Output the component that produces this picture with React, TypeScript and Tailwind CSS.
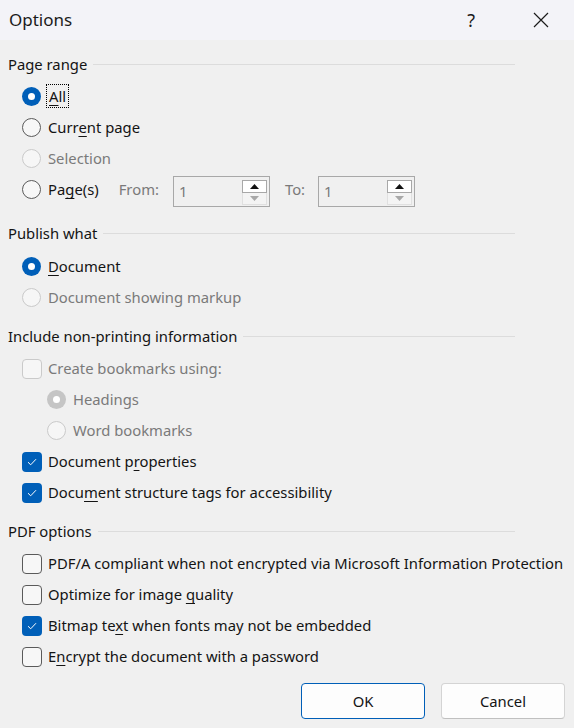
import type { ReactNode } from "react"

const font = { fontFamily: '"Noto Sans", "Open Sans", Arial, sans-serif' }

// Section heading with the thin rule running to the right
function Heading({ label, mt }: { label: string; mt: string }) {
  return (
    <div className={`flex items-center h-[22px] w-[507px] ${mt}`}>
      <span className="text-[14.8px] text-[#141414] whitespace-nowrap">{label}</span>
      <div className="flex-1 h-px bg-[#dcdcdc] ml-[6px] mt-[1px]" />
    </div>
  )
}

function Radio({ checked, disabled }: { checked?: boolean; disabled?: boolean }) {
  if (checked)
    return (
      <span
        className={`w-[19px] h-[19px] rounded-full flex items-center justify-center shrink-0 ${
          disabled ? "bg-[#c5c5c5]" : "bg-[#005fb8]"
        }`}
      >
        <span className="w-[7px] h-[7px] rounded-full bg-white" />
      </span>
    )
  return (
    <span
      className={`w-[19px] h-[19px] rounded-full border shrink-0 ${
        disabled ? "border-[#cacaca] bg-[#f6f6f6]" : "border-[#5a5a5a] bg-[#f7f7f7]"
      }`}
    />
  )
}

function Check({ checked, disabled }: { checked?: boolean; disabled?: boolean }) {
  if (checked)
    return (
      <span className="w-[20px] h-[20px] rounded-[4px] bg-[#005fb8] flex items-center justify-center shrink-0">
        <svg width="10" height="8" viewBox="0 0 10 8" fill="none">
          <path d="M1 4.2 L3.7 6.8 L9 1.2" stroke="white" strokeWidth="1" />
        </svg>
      </span>
    )
  return (
    <span
      className={`w-[20px] h-[20px] rounded-[4px] border shrink-0 ${
        disabled ? "border-[#cacaca] bg-[#f6f6f6]" : "border-[#5a5a5a] bg-[#f7f7f7]"
      }`}
    />
  )
}

function Row({
  control,
  children,
  disabled,
  indent,
  radio,
}: {
  control: ReactNode
  children: ReactNode
  disabled?: boolean
  indent?: boolean
  radio?: boolean
}) {
  return (
    <div className={`flex items-center h-[31px] ${indent ? "pl-[39px]" : "pl-[14px]"}`}>
      {control}
      <span
        className={`${radio ? "ml-[7px]" : "ml-[6px]"} text-[14.8px] whitespace-nowrap ${
          disabled ? "text-[#7a7a7a]" : "text-[#141414]"
        }`}
      >
        {children}
      </span>
    </div>
  )
}

function U({ children }: { children: ReactNode }) {
  return <span className="underline underline-offset-[3px] decoration-1">{children}</span>
}

function Spin() {
  return (
    <div className="w-[97px] h-[31px] border border-[#a8a8a8] bg-[#f0f0f0] flex items-start pt-[3px] pr-[2px]">
      <span className="flex-1 pl-[5px] text-[14.8px] text-[#7a7a7a] leading-[22px]">1</span>
      <div className="flex flex-col w-[25px]">
        <div className="h-[13px] bg-white border border-[#a8a8a8] flex items-center justify-center">
          <svg width="9" height="5" viewBox="0 0 9 5">
            <path d="M0 5 L4.5 0 L9 5 Z" fill="#111" />
          </svg>
        </div>
        <div className="h-[12px] bg-[#f4f4f4] border border-[#e0e0e0] border-t-0 flex items-center justify-center">
          <svg width="9" height="5" viewBox="0 0 9 5">
            <path d="M0 0 L9 0 L4.5 5 Z" fill="#a8a8a8" />
          </svg>
        </div>
      </div>
    </div>
  )
}

export default function App() {
  return (
    <div className="w-[574px] h-[728px] bg-[#f0f0f0] overflow-hidden" style={font}>
      {/* Title bar */}
      <div className="h-[40px] bg-[#f3f3f8] flex items-center pl-[9px]">
        <span className="text-[17px] text-[#1b1b1b] flex-1">Options</span>
        <span className="text-[18px] text-[#1b1b1b] mr-[58px]">?</span>
        <svg width="16" height="16" viewBox="0 0 16 16" className="mr-[25px]">
          <path d="M1 1 L15 15 M15 1 L1 15" stroke="#1b1b1b" strokeWidth="1.2" />
        </svg>
      </div>

      <div className="pl-[8px]">
        {/* Page range */}
        <Heading label="Page range" mt="mt-[13px]" />
        <div className="mt-[6px]">
          <Row control={<Radio checked />} radio>
            <span className="outline outline-1 outline-dotted outline-black outline-offset-[1px] px-[1px]">
              <U>A</U>ll
            </span>
          </Row>
          <Row control={<Radio />} radio>
            Curr<U>e</U>nt page
          </Row>
          <Row control={<Radio disabled />} disabled radio>
            Selection
          </Row>
          <div className="flex items-center h-[31px] pl-[14px]">
            <Radio />
            <span className="ml-[7px] text-[14.8px] text-[#141414]">
              Pa<U>g</U>e(s)
            </span>
            <span className="ml-[20px] text-[14.8px] text-[#7a7a7a]">From:</span>
            <div className="ml-[14px] mt-[4px]">
              <Spin />
            </div>
            <span className="ml-[15px] text-[14.8px] text-[#7a7a7a]">To:</span>
            <div className="ml-[13px] mt-[4px]">
              <Spin />
            </div>
          </div>
        </div>

        {/* Publish what */}
        <Heading label="Publish what" mt="mt-[17px]" />
        <div className="mt-[7px]">
          <Row control={<Radio checked />} radio>
            <U>D</U>ocument
          </Row>
          <Row control={<Radio disabled />} disabled radio>
            Document showing markup
          </Row>
        </div>

        {/* Include non-printing information */}
        <Heading label="Include non-printing information" mt="mt-[12px]" />
        <div className="mt-[6px]">
          <Row control={<Check disabled />} disabled>
            Create bookmarks using:
          </Row>
          <Row control={<Radio checked disabled />} disabled indent radio>
            Headings
          </Row>
          <Row control={<Radio disabled />} disabled indent radio>
            Word bookmarks
          </Row>
          <Row control={<Check checked />}>
            Document p<U>r</U>operties
          </Row>
          <Row control={<Check checked />}>
            Docu<U>m</U>ent structure tags for accessibility
          </Row>
        </div>

        {/* PDF options */}
        <Heading label="PDF options" mt="mt-[12px]" />
        <div className="mt-[6px]">
          <Row control={<Check />}>
            PDF/A compliant when not encrypted via Microsoft Information Protection
          </Row>
          <Row control={<Check />}>
            Optimize for image <U>q</U>uality
          </Row>
          <Row control={<Check checked />}>
            Bitmap te<U>x</U>t when fonts may not be embedded
          </Row>
          <Row control={<Check />}>
            E<U>n</U>crypt the document with a password
          </Row>
        </div>
      </div>

      {/* Buttons */}
      <div className="flex justify-end gap-[16px] pr-[9px] mt-[11px]">
        <button className="w-[124px] h-[36px] rounded-[4px] border border-[#005fb8] bg-[#fdfdfd] text-[14.8px] text-[#141414]">
          OK
        </button>
        <button className="w-[124px] h-[36px] rounded-[4px] border border-[#d4d4d4] border-b-[#c0c0c0] bg-[#fdfdfd] text-[14.8px] text-[#141414]">
          Cancel
        </button>
      </div>
    </div>
  )
}
